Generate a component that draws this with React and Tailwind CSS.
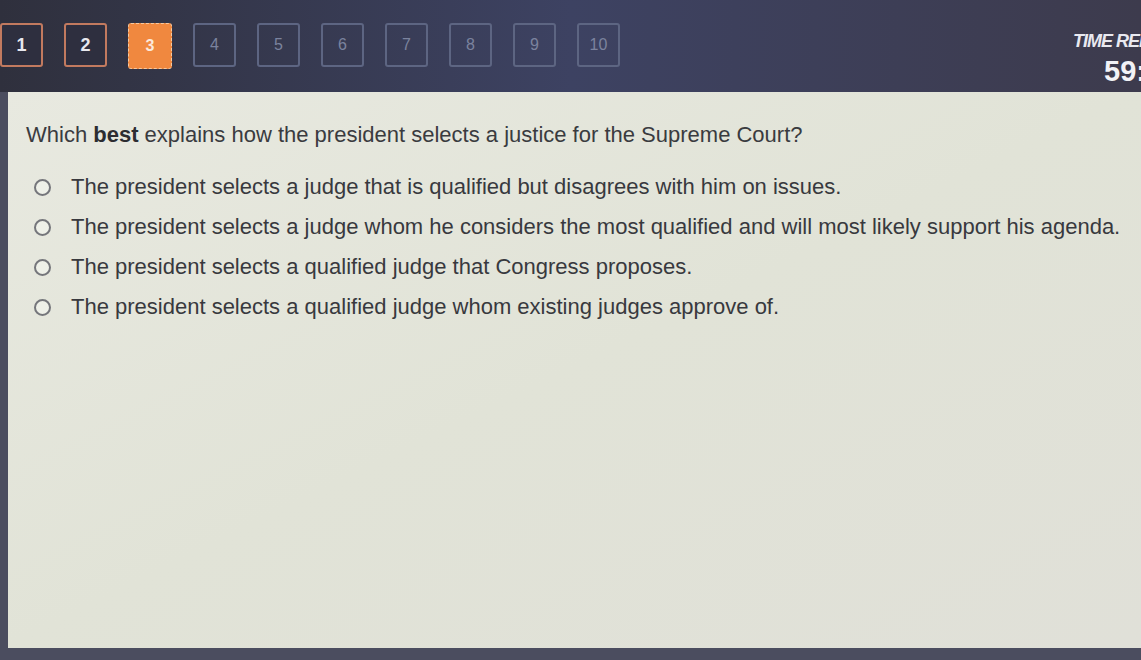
const QUESTIONS = [1, 2, 3, 4, 5, 6, 7, 8, 9, 10];
const CURRENT = 3;

const OPTIONS = [
  'The president selects a judge that is qualified but disagrees with him on issues.',
  'The president selects a judge whom he considers the most qualified and will most likely support his agenda.',
  'The president selects a qualified judge that Congress proposes.',
  'The president selects a qualified judge whom existing judges approve of.',
];

function NavButton({ n }) {
  if (n === CURRENT) {
    return (
      <button className="w-[44px] h-[46px] rounded-[3px] bg-[#f0883f] border border-dashed border-[#f6c9a0] text-[#fbe9dc] text-[16px] font-bold flex items-center justify-center">
        {n}
      </button>
    );
  }
  if (n < CURRENT) {
    return (
      <button className="w-[43px] h-[44px] rounded-[3px] bg-[#2e2f3f] border-2 border-[#c27a5f] text-[#e8e8ee] text-[18px] font-bold flex items-center justify-center">
        {n}
      </button>
    );
  }
  return (
    <button className="w-[43px] h-[44px] rounded-[3px] border-2 border-[#5d6582] text-[#7b839e] text-[16px] flex items-center justify-center">
      {n}
    </button>
  );
}

export default function App() {
  return (
    <div className="w-[1141px] h-[660px] overflow-hidden flex flex-col bg-[#4b4d5f] font-['Liberation_Sans',Arial,sans-serif]">
      {/* top bar */}
      <div className="h-[92px] shrink-0 flex items-start justify-between bg-gradient-to-r from-[#2f303d] via-[#3d4262] to-[#3d3b4d]">
        <div className="flex gap-[21px] pt-[23px]">
          {QUESTIONS.map((n) => (
            <NavButton key={n} n={n} />
          ))}
        </div>
        <div className="w-[68px] overflow-hidden pt-[32px] whitespace-nowrap">
          <div className="text-[18px] font-bold italic tracking-[-1px] text-[#e9e9f0] leading-none">TIME REMAINING</div>
          <div className="text-[29px] font-bold text-[#f2f2f6] leading-none mt-[7px] pl-[31px]">59:00</div>
        </div>
      </div>

      {/* question panel */}
      <div className="flex-1 ml-[8px] mb-[12px] bg-gradient-to-br from-[#e8e9e0] via-[#e1e3d7] to-[#e0e0d8] pl-[18px] pt-[30px]">
        <p className="text-[22px] leading-[26px] text-[#3a3b3f]">
          Which <span className="font-bold text-[#2c2d31]">best</span> explains how the president selects a justice for the Supreme Court?
        </p>
        <div className="mt-[26px] flex flex-col gap-[14px] pl-[8px]">
          {OPTIONS.map((opt) => (
            <label key={opt} className="flex items-center gap-[20px] text-[22px] text-[#38393e] leading-[26px]">
              <span className="w-[17px] h-[17px] rounded-full border-2 border-[#75767b] bg-[#eef0e8] shrink-0" />
              {opt}
            </label>
          ))}
        </div>
      </div>
    </div>
  );
}
